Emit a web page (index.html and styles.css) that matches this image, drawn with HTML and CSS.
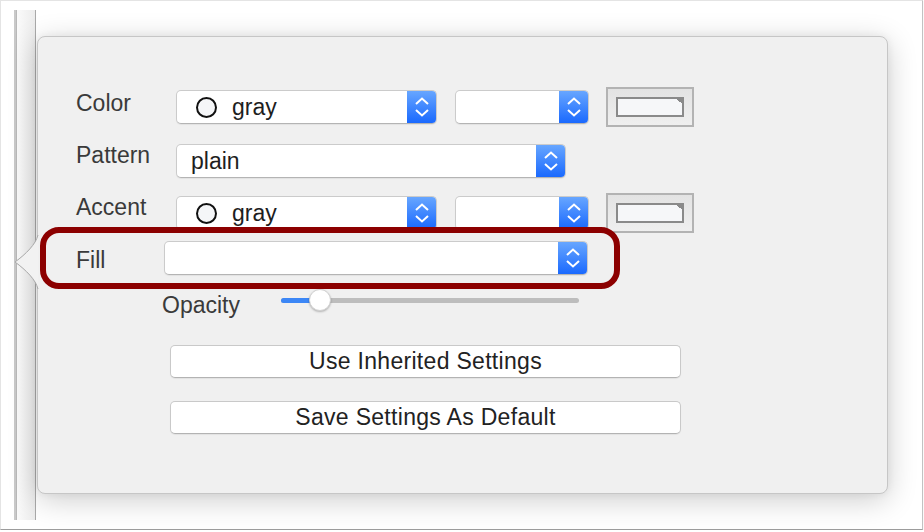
FILE: index.html
```html
<!DOCTYPE html>
<html lang="en">
<head>
  <meta charset="UTF-8">
  <title>Inspector - Fill</title>
  <link rel="stylesheet" href="styles.css">
</head>
<body>

  <div class="shot">
    <!-- sidebar rail the popover points at -->
    <div class="rail"></div>
    <svg class="arrow" width="25" height="54" viewBox="0 0 25 54">
      <path d="M24 0 C22 9 12 19 1 27 C12 35 22 45 24 54 Z" fill="#f2f2f2"/>
      <path d="M24 0 C22 9 12 19 1 27 C12 35 22 45 24 54" fill="none" stroke="#a9a9a9" stroke-width="1"/>
    </svg>

    <div class="panel">

      <div class="row">
        <span class="label">Color</span>
        <div class="popup w-main">
          <span class="swatch"></span>
          <span class="value">gray</span>
          <span class="stepper"><svg width="14" height="20" viewBox="0 0 14 20"><path d="M1 7 L7 1.5 L13 7 M1 13 L7 18.5 L13 13" fill="none" stroke="#fff" stroke-width="2"/></svg></span>
        </div>
        <div class="popup w-small">
          <span class="value"></span>
          <span class="stepper"><svg width="14" height="20" viewBox="0 0 14 20"><path d="M1 7 L7 1.5 L13 7 M1 13 L7 18.5 L13 13" fill="none" stroke="#fff" stroke-width="2"/></svg></span>
        </div>
        <div class="well"><span class="well-inner"></span></div>
      </div>

      <div class="row row-pattern">
        <span class="label label-high">Pattern</span>
        <div class="popup w-wide">
          <span class="value plain">plain</span>
          <span class="stepper"><svg width="14" height="20" viewBox="0 0 14 20"><path d="M1 7 L7 1.5 L13 7 M1 13 L7 18.5 L13 13" fill="none" stroke="#fff" stroke-width="2"/></svg></span>
        </div>
      </div>

      <div class="row row-accent">
        <span class="label label-high">Accent</span>
        <div class="popup w-main">
          <span class="swatch"></span>
          <span class="value">gray</span>
          <span class="stepper"><svg width="14" height="20" viewBox="0 0 14 20"><path d="M1 7 L7 1.5 L13 7 M1 13 L7 18.5 L13 13" fill="none" stroke="#fff" stroke-width="2"/></svg></span>
        </div>
        <div class="popup w-small">
          <span class="value"></span>
          <span class="stepper"><svg width="14" height="20" viewBox="0 0 14 20"><path d="M1 7 L7 1.5 L13 7 M1 13 L7 18.5 L13 13" fill="none" stroke="#fff" stroke-width="2"/></svg></span>
        </div>
        <div class="well"><span class="well-inner"></span></div>
      </div>

      <!-- highlighted row -->
      <div class="fill-box">
        <span class="label fill-label">Fill</span>
        <div class="popup w-fill">
          <span class="value"></span>
          <span class="stepper"><svg width="14" height="20" viewBox="0 0 14 20"><path d="M1 7 L7 1.5 L13 7 M1 13 L7 18.5 L13 13" fill="none" stroke="#fff" stroke-width="2"/></svg></span>
        </div>
      </div>

      <div class="opacity-row">
        <span class="label opacity-label">Opacity</span>
        <div class="slider">
          <span class="slider-fill"></span>
          <span class="knob"></span>
        </div>
      </div>

      <button class="btn btn-first">Use Inherited Settings</button>
      <button class="btn">Save Settings As Default</button>

    </div>
  </div>

</body>
</html>
```

FILE: styles.css
```css
/* Basic page */
body {
  margin: 0;
  background: #fff;
  font-family: "Liberation Sans", Arial, sans-serif;
  font-size: 23px;
}

.shot {
  position: relative;
  box-sizing: border-box;
  width: 923px;
  height: 530px;
  display: flex;
  align-items: flex-start;
  padding: 9px 0 0 13px;
  border-top: 1px solid #e4e4e4;
  border-left: 1px solid #e4e4e4;
  border-right: 1px solid #c2c2c2;
  border-bottom: 1px solid #9c9c9c;
  box-shadow: 0 1px 1px rgba(0, 0, 0, 0.12);
  background: #fff;
}

/* Sidebar rail */
.rail {
  box-sizing: border-box;
  width: 22px;
  height: 510px;
  flex: none;
  border-left: 2px solid #c9c9c9;
  border-right: 1px solid #a9a9a9;
  background: linear-gradient(to right, #fbfbfb, #ececec);
  box-shadow: inset 1px 0 0 #b9b9b9;
}

.arrow {
  position: absolute;
  left: 13px;
  top: 234px;
  z-index: 2;
}

/* Popover */
.panel {
  box-sizing: border-box;
  width: 851px;
  height: 458px;
  flex: none;
  margin: 26px 0 0 1px;
  padding-top: 53px;
  background: #f0f0f0;
  border: 1px solid #c6c6c6;
  border-radius: 8px;
  box-shadow: 0 6px 30px rgba(0, 0, 0, 0.2), 0 0 8px rgba(0, 0, 0, 0.06);
}

.row {
  display: flex;
  align-items: center;
  height: 34px;
  padding-left: 38px;
}

.row-pattern {
  margin-top: 20px;
}

.row-accent {
  margin-top: 18px;
}

.label {
  width: 100px;
  flex: none;
  color: #3a3a3a;
  line-height: 26px;
  margin-bottom: 8px;
}

.label-high {
  margin-bottom: 12px;
}

/* Popup buttons */
.popup {
  box-sizing: border-box;
  height: 34px;
  flex: none;
  display: flex;
  align-items: center;
  background: #fff;
  border: 1px solid #cbcbcb;
  border-bottom-color: #b4b4b4;
  border-radius: 5px;
  overflow: hidden;
  box-shadow: 0 1px 1px rgba(0, 0, 0, 0.06);
}

.w-main { width: 261px; margin-right: 18px; }
.w-small { width: 134px; margin-right: 17px; }
.w-wide { width: 390px; }
.w-fill { width: 424px; }

.swatch {
  box-sizing: border-box;
  width: 21px;
  height: 21px;
  flex: none;
  margin-left: 19px;
  border: 2px solid #111;
  border-radius: 50%;
  background: #f5f6f8;
}

.value {
  flex: 1;
  color: #1e1e1e;
  line-height: 26px;
  padding-left: 15px;
}

.value.plain {
  padding-left: 14px;
}

.stepper {
  width: 29px;
  height: 100%;
  flex: none;
  display: flex;
  align-items: center;
  justify-content: center;
  background: linear-gradient(to bottom, #67a6ff, #1a69fe);
}

.stepper svg {
  display: block;
}

/* Colour well */
.well {
  box-sizing: border-box;
  width: 88px;
  height: 40px;
  flex: none;
  display: flex;
  align-items: center;
  justify-content: center;
  border: 2px solid #b3b3b3;
  background: linear-gradient(to bottom, #e3e3e3, #efefef);
}

.well-inner {
  position: relative;
  box-sizing: border-box;
  width: 68px;
  height: 20px;
  border: 2px solid #8a8a8a;
  background: #f6f7f9;
}

.well-inner::after {
  content: "";
  position: absolute;
  top: 0;
  right: 0;
  width: 5px;
  height: 5px;
  background: linear-gradient(45deg, transparent 50%, #8a8a8a 50%);
}

/* Highlighted Fill row */
.fill-box {
  position: relative;
  z-index: 1;
  box-sizing: border-box;
  width: 580px;
  height: 62px;
  margin: -3px 0 0 2px;
  padding-left: 30px;
  display: flex;
  align-items: center;
  border: 6px solid #8c0000;
  border-radius: 19px;
}

.fill-label {
  width: 88px;
  margin-bottom: -3px;
}

/* Opacity */
.opacity-row {
  display: flex;
  align-items: center;
  height: 22px;
  padding-left: 124px;
}

.opacity-label {
  width: 119px;
  margin: 10px 0 0;
}

.slider {
  position: relative;
  width: 298px;
  height: 5px;
  border-radius: 3px;
  background: #bdbdbd;
}

.slider-fill {
  display: block;
  width: 32px;
  height: 100%;
  border-radius: 3px 0 0 3px;
  background: #3c87f6;
}

.knob {
  position: absolute;
  left: 28px;
  top: -9px;
  box-sizing: border-box;
  width: 22px;
  height: 22px;
  border-radius: 50%;
  background: #fff;
  border: 1px solid #d2d2d2;
  box-shadow: 0 1px 2px rgba(0, 0, 0, 0.25);
}

/* Push buttons */
.btn {
  display: block;
  box-sizing: border-box;
  width: 511px;
  height: 33px;
  margin: 23px 0 0 132px;
  padding: 0;
  font-family: inherit;
  font-size: 23px;
  letter-spacing: 0.3px;
  color: #222;
  background: #fff;
  border: 1px solid #c9c9c9;
  border-bottom-color: #b3b3b3;
  border-radius: 5px;
  box-shadow: 0 1px 1px rgba(0, 0, 0, 0.06);
}

.btn-first {
  margin-top: 34px;
}
```
